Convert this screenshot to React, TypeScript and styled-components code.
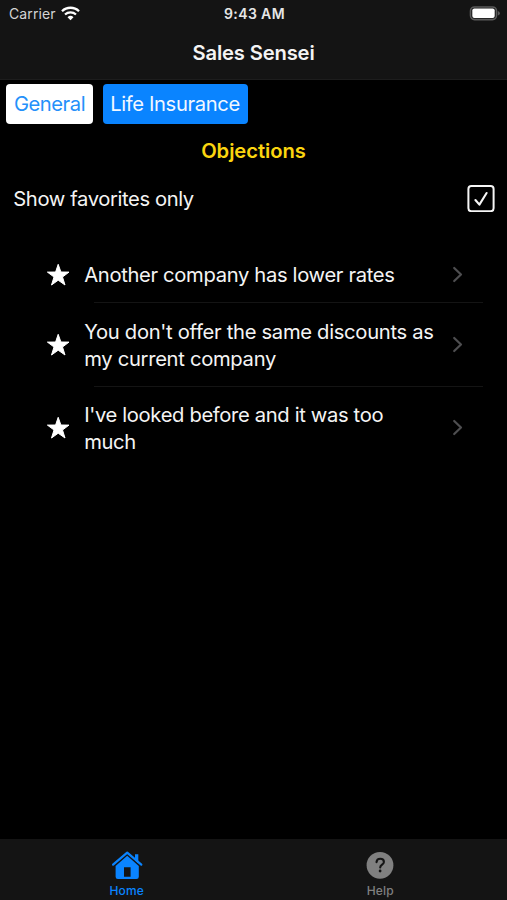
import React from "react";
import styled, { createGlobalStyle } from "styled-components";

const GlobalStyle = createGlobalStyle`
  * { box-sizing: border-box; }
  body { margin: 0; background: #000; }
`;

const Screen = styled.div`
  display: flex;
  flex-direction: column;
  width: 100%;
  height: 100vh;
  overflow: hidden;
  background: #000;
  color: #f4f4f4;
  font-family: Inter, "Liberation Sans", sans-serif;
  font-size: 20.2px;
  line-height: 27px;
`;

const Header = styled.header`
  flex: none;
  height: 80px;
  background: #141414;
  border-bottom: 1px solid #1d1d1d;
`;

const StatusBar = styled.div`
  display: grid;
  grid-template-columns: 1fr auto 1fr;
  align-items: center;
  height: 27px;
  padding: 0 7px 0 9px;
  font-size: 14px;
  line-height: 27px;
`;

const Carrier = styled.div`
  display: flex;
  align-items: center;
  gap: 5px;
  color: #d4d4d4;
  letter-spacing: 0.1px;

  svg {
    margin-top: -1px;
  }
`;

const Clock = styled.div`
  font-weight: 600;
  letter-spacing: 0.38px;
  color: #e6e6e6;
`;

const BatterySlot = styled.div`
  display: flex;
  justify-content: flex-end;
`;

const NavTitle = styled.h1`
  margin: 12px 0 0;
  text-align: center;
  font-size: 20.2px;
  font-weight: 600;
  line-height: 27px;
  letter-spacing: -0.15px;
`;

const Main = styled.main`
  flex: 1;
  min-height: 0;
`;

const Categories = styled.div`
  display: flex;
  gap: 9.5px;
  padding: 4px 6px 0;
`;

const Category = styled.button<{ $selected?: boolean }>`
  height: 39.5px;
  padding: 0 0 1px;
  border: 0;
  border-radius: 4px;
  width: ${(p) => (p.$selected ? 145 : 87)}px;
  background: ${(p) => (p.$selected ? "#0a84ff" : "#fff")};
  color: ${(p) => (p.$selected ? "#f2f8ff" : "#2490fa")};
  font: inherit;
  letter-spacing: ${(p) => (p.$selected ? -0.36 : -0.45)}px;
  white-space: nowrap;
`;

const SectionTitle = styled.h2`
  margin: 13.5px 0 0;
  text-align: center;
  color: #fbd50f;
  font-size: 20.2px;
  font-weight: 600;
  line-height: 27px;
  letter-spacing: -0.05px;
`;

const FilterRow = styled.label`
  display: flex;
  align-items: center;
  justify-content: space-between;
  height: 28px;
  margin-top: 20px;
  padding: 0 12px 0 13.3px;
  letter-spacing: -0.38px;
`;

const List = styled.ul`
  list-style: none;
  margin: 34px 24px 0 46px;
  padding: 0;
`;

const Item = styled.li<{ $divided?: boolean }>`
  display: grid;
  grid-template-columns: 24px 353.5px 1fr;
  column-gap: 14.2px;
  align-items: center;
  padding: 14px 0;
  ${(p) =>
    p.$divided &&
    `background: linear-gradient(#141414, #141414) 48px 100% / calc(100% - 48px) 1px no-repeat;
     padding: 15px 0;`}
`;

const ItemText = styled.span<{ $spacing: number }>`
  white-space: pre-line;
  letter-spacing: ${(p) => p.$spacing}px;
`;

const TabBar = styled.nav`
  flex: none;
  display: grid;
  grid-template-columns: 1fr 1fr;
  height: 61px;
  background: #141414;
`;

const Tab = styled.a<{ $active?: boolean }>`
  display: flex;
  flex-direction: column;
  align-items: center;
  padding-top: 11px;
  color: ${(p) => (p.$active ? "#0a84ff" : "#808080")};
  font-size: 12px;
  font-weight: 500;
  line-height: 14px;
  letter-spacing: 0.2px;

  svg {
    margin-bottom: 4px;
  }
`;

const WifiIcon = () => (
  <svg width="19" height="15" viewBox="0 0 19 15" fill="none" stroke="#fff">
    <path d="M1 5.2a12.2 12.2 0 0 1 17 0" strokeWidth="2.3" />
    <path d="M4 8.5a8 8 0 0 1 11 0" strokeWidth="2.2" />
    <path d="M9.5 14.2 6.5 11.2a4.3 4.3 0 0 1 6 0Z" fill="#fff" stroke="none" />
  </svg>
);

const BatteryIcon = () => (
  <svg width="31" height="15" viewBox="0 0 31 15">
    <rect x="1.5" y="1" width="26" height="12.6" rx="4" fill="#141414" stroke="#5a5a5a" strokeWidth="1.6" />
    <rect x="3.3" y="2.6" width="22.4" height="9.4" rx="2" fill="#fff" />
    <path d="M28.9 5q2 .7 2 2.3t-2 2.3Z" fill="#5a5a5a" />
  </svg>
);

const CheckboxIcon = () => (
  <svg width="28" height="28" viewBox="0 0 28 28" fill="none" stroke="#f6f6f6">
    <rect x="1.4" y="2" width="25.2" height="25.2" rx="3" strokeWidth="2" />
    <path d="m8.4 16 4 4.6L19.6 9" strokeWidth="2.1" strokeLinecap="round" strokeLinejoin="round" />
  </svg>
);

const StarIcon = () => (
  <svg width="24" height="24" viewBox="0 0 24 24" fill="#fff" stroke="#fff" strokeWidth="1" strokeLinejoin="round">
    <path d="M12.2 1.3 14.9 9 23 9.1 16.5 14 19 22 12.2 17.2 5.5 22 8 14 1.4 9.1 9.6 9Z" />
  </svg>
);

const ChevronIcon = () => (
  <svg width="12" height="18" viewBox="0 0 12 18" fill="none" stroke="#4e4e50" strokeWidth="2.2">
    <path d="m2.2 2 6.8 6.5L2.2 15" strokeLinecap="round" strokeLinejoin="round" />
  </svg>
);

const HomeIcon = () => (
  <svg width="32" height="30" viewBox="0 0 32 30" fill="#0a84ff">
    <path d="M2.1 14.7 16.2 2.6 30.3 14.7" fill="none" stroke="#0a84ff" strokeWidth="2.2" strokeLinecap="round" strokeLinejoin="round" />
    <path d="M24 4.3H27.3v9.2L24 10.6Z" />
    <path fillRule="evenodd" d="M16.2 5.8 27.8 16v10.7q0 2.3-2.3 2.3H6.9q-2.3 0-2.3-2.3V16ZM13 17.3v9.4h6.6v-9.4Z" />
  </svg>
);

const HelpIcon = () => (
  <svg width="28" height="30" viewBox="0 0 28 30" fill="none">
    <circle cx="14" cy="15.3" r="13.4" fill="#808080" />
    <path d="M10.5 12.1c.2-2.1 1.6-3.3 3.7-3.3 2.2 0 3.7 1.2 3.7 3.1 0 2.8-3.7 2.8-3.7 5.6" stroke="#141414" strokeWidth="2.1" strokeLinecap="round" />
    <circle cx="14.1" cy="21" r="1.4" fill="#141414" />
  </svg>
);

const objections = [
  { text: "Another company has lower rates", spacing: -0.33 },
  { text: "You don't offer the same discounts as\nmy current company", spacing: -0.3 },
  { text: "I've looked before and it was too\nmuch", spacing: -0.35 },
];

export default function App() {
  return (
    <Screen>
      <GlobalStyle />
      <Header>
        <StatusBar>
          <Carrier>
            Carrier <WifiIcon />
          </Carrier>
          <Clock>9:43 AM</Clock>
          <BatterySlot>
            <BatteryIcon />
          </BatterySlot>
        </StatusBar>
        <NavTitle>Sales Sensei</NavTitle>
      </Header>
      <Main>
        <Categories>
          <Category>General</Category>
          <Category $selected>Life Insurance</Category>
        </Categories>
        <SectionTitle>Objections</SectionTitle>
        <FilterRow>
          Show favorites only
          <CheckboxIcon />
        </FilterRow>
        <List>
          {objections.map((o, i) => (
            <Item key={o.text} $divided={i < objections.length - 1}>
              <StarIcon />
              <ItemText $spacing={o.spacing}>{o.text}</ItemText>
              <ChevronIcon />
            </Item>
          ))}
        </List>
      </Main>
      <TabBar>
        <Tab $active>
          <HomeIcon />
          Home
        </Tab>
        <Tab>
          <HelpIcon />
          Help
        </Tab>
      </TabBar>
    </Screen>
  );
}
